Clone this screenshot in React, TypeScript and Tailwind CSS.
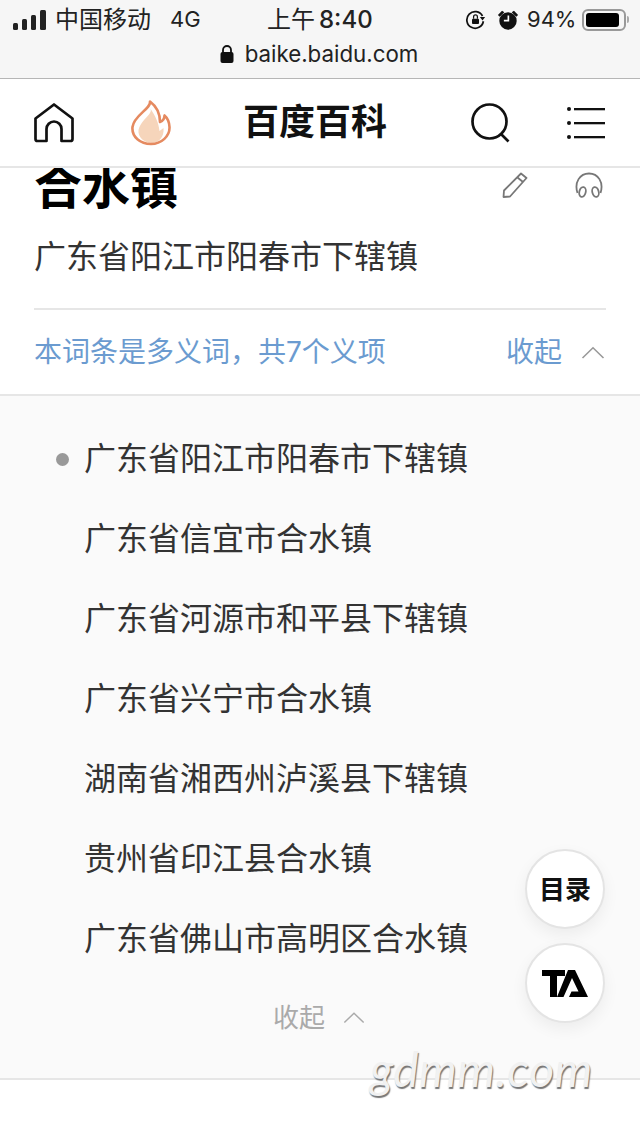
const senses = [
  "广东省阳江市阳春市下辖镇",
  "广东省信宜市合水镇",
  "广东省河源市和平县下辖镇",
  "广东省兴宁市合水镇",
  "湖南省湘西州泸溪县下辖镇",
  "贵州省印江县合水镇",
  "广东省佛山市高明区合水镇",
];

const font = "font-['Inter','Noto_Sans_CJK_SC',sans-serif]";

function ChevronUp({ className }: { className: string }) {
  return (
    <svg viewBox="0 0 24 13" fill="none" stroke="currentColor" strokeWidth="1.6" className={className}>
      <path d="M1.5 12 12 1.8 22.5 12" />
    </svg>
  );
}

function StatusBar() {
  return (
    <div className="flex h-[39px] items-center pl-[13px] text-[24px] text-[#222]">
      <svg viewBox="0 0 34 20" className="h-[20px] w-[34px]" fill="currentColor">
        <rect x="0" y="13" width="5" height="7" rx="1.5" />
        <rect x="9" y="9" width="5" height="11" rx="1.5" />
        <rect x="18" y="5" width="5" height="15" rx="1.5" />
        <rect x="27" y="0" width="6" height="20" rx="1.5" />
      </svg>
      <span className="ml-[8px] w-[115px]">中国移动</span>
      <span className="w-[31px] text-[22px]">4G</span>
      <span className="ml-[66px] flex w-[198px] items-center">
        上午
        <span className="ml-[4px] text-[24px] font-medium">8:40</span>
      </span>
      <svg viewBox="0 0 24 24" className="h-[21px] w-[21px]" fill="none" stroke="#111" strokeWidth="2">
        <path d="M20 8A9.5 9.5 0 1 0 21 14" />
        <path d="M17 9h6l-3 4z" fill="#111" stroke="none" />
        <rect x="8" y="11" width="8" height="6" rx="1" fill="#111" stroke="none" />
        <path d="M9.8 11V9a2.2 2.2 0 0 1 4.4 0v2" strokeWidth="1.4" />
      </svg>
      <svg viewBox="0 0 24 24" className="ml-[11px] h-[22px] w-[22px]" fill="#111">
        <circle cx="12" cy="13" r="9.5" />
        <path d="M1 6.5 5.5 2 8 3.500 3 8.500zM23 6.500 18.500 2 16 3.500 21 8.500z" />
        <path d="M11.500 7h1.800v6.500H7.500v-1.700h4z" fill="#fff" />
      </svg>
      <span className="ml-[8px] w-[50px] text-[22px]">94%</span>
      <div className="ml-[5px] flex h-[22px] w-[44px] items-center rounded-[6px] border-2 border-[#999] p-[2px]">
        <div className="h-full w-[92%] rounded-[3px] bg-black" />
      </div>
      <div className="ml-[1px] h-[7px] w-[2px] rounded-r bg-[#aaa]" />
    </div>
  );
}

function UrlBar() {
  return (
    <div className="flex h-[40px] items-start justify-center gap-[11px] border-b-[1.5px] border-[#b6b6b6] pt-[1px] pr-[2px]">
      <svg viewBox="0 0 14 18" className="mt-[4px] h-[20px] w-[14px]" fill="#111">
        <rect x="0.5" y="7" width="13" height="11" rx="2" />
        <path d="M3 8V5a4 4 0 0 1 8 0v3" fill="none" stroke="#111" strokeWidth="1.8" />
      </svg>
      <span className="text-[22.3px] leading-[28px] text-[#222]">baike.baidu.com</span>
    </div>
  );
}

function NavBar() {
  return (
    <nav className="flex h-[89px] items-center border-b-2 border-[#e6e6e6] bg-white">
      <svg viewBox="0 0 40 40" className="ml-[34px] h-[40px] w-[40px]" fill="none" stroke="#111" strokeWidth="2.7" strokeLinejoin="round">
        <path d="M1.5 15.500 20 1.500 38.500 15.500V36a2 2 0 0 1-2 2H27.500V26a7.500 7.500 0 0 0-15 0V38H3.500a2 2 0 0 1-2-2z" />
      </svg>
      <svg viewBox="0 0 40 46" className="ml-[57px] h-[46px] w-[40px]">
        <path d="M19 8C23 14 11 18 7.500 30c-1 7 6 13 13 13s13-6 12-15l-4 3c-1-9-4-15-9.500-23z" fill="#f6d5bb" />
        <path d="M19 1.500C20 9 3 15 1.500 27c-1 10 8 17 18.500 17s19-8 18.500-17c-.3-5-2-9-5-11.500 0 3-1.500 5.500-4.500 6.500C29 13 25 6 19 1.500z" fill="none" stroke="#e58a60" strokeWidth="2.6" strokeLinejoin="round" />
      </svg>
      <h1 className="ml-[72px] mb-[2px] w-[145px] text-[36px] leading-none font-bold text-[#111]">百度百科</h1>
      <svg viewBox="0 0 40 40" className="ml-[83px] h-[40px] w-[40px]" fill="none" stroke="#111" strokeWidth="2.7">
        <circle cx="18.500" cy="18.500" r="17" />
        <path d="m30 31 7.500 7.500" />
      </svg>
      <svg viewBox="0 0 38 34" className="ml-[56px] h-[34px] w-[38px]" fill="#111">
        <circle cx="2" cy="3" r="2" />
        <circle cx="2" cy="17" r="2" />
        <circle cx="2" cy="31" r="2" />
        <rect x="7" y="2" width="31" height="2.300" />
        <rect x="7" y="16" width="31" height="2.300" />
        <rect x="7" y="30" width="31" height="2.300" />
      </svg>
    </nav>
  );
}

function TitleBlock() {
  return (
    <section className="h-[228px] overflow-hidden border-b-2 border-[#e6e6e6] bg-white px-[34px]">
      <div className="-mt-[4px] flex items-start justify-between">
        <h2 className="text-[48px] leading-[46px] font-bold text-[#000]">合水镇</h2>
        <div className="mr-[3px] mt-[8px] flex gap-[47px]">
          <svg viewBox="0 0 26 26" className="h-[26px] w-[26px]" fill="none" stroke="#777" strokeWidth="1.8" strokeLinejoin="round">
            <path d="M19 1.500 24.500 6 8 24.500 1.500 25 2 18.500z" />
            <path d="m15.500 5.500 5.500 4.500" />
          </svg>
          <svg viewBox="0 0 28 27" className="h-[27px] w-[28px]" fill="none" stroke="#777" strokeWidth="1.8">
            <path d="M2.500 21C-1 10 5 1.500 14 1.500S29 10 25.500 21" />
            <ellipse cx="7.500" cy="20" rx="3.200" ry="5" transform="rotate(15 7.500 20)" />
            <ellipse cx="20.500" cy="20" rx="3.200" ry="5" transform="rotate(-15 20.500 20)" />
          </svg>
        </div>
      </div>
      <p className="mt-[25px] text-[32px] leading-[44px] text-[#333]">广东省阳江市阳春市下辖镇</p>
      <div className="mt-[29px] flex h-[86px] items-center border-t-2 border-[#e6e6e6] pr-[1px] text-[#6b9bd0]">
        <span className="text-[28px]">本词条是多义词，共7个义项</span>
        <span className="ml-auto text-[28px]">收起</span>
        <ChevronUp className="ml-[19px] h-[13px] w-[24px] text-[#999]" />
      </div>
    </section>
  );
}

function SenseList() {
  return (
    <section className="h-[684px] border-b-2 border-[#e6e6e6] bg-[#fafafa] pl-[84px] pt-[23px]">
      <ul>
        {senses.map((sense, i) => (
          <li key={sense} className="relative h-[80px] text-[32px] leading-[80px] text-[#333]">
            {i === 0 && <span className="absolute top-[34px] -left-[28px] h-[13px] w-[13px] rounded-full bg-[#999]" />}
            {sense}
          </li>
        ))}
      </ul>
      <div className="-ml-[84px] mt-[19px] flex items-center justify-center pr-[2px] text-[26px] text-[#aaa]">
        <span>收起</span>
        <ChevronUp className="ml-[18px] h-[13px] w-[22px]" />
      </div>
    </section>
  );
}

function FloatButton({ children, className }: { children: React.ReactNode; className: string }) {
  return (
    <div className={`absolute left-[525px] flex h-[80px] w-[80px] items-center justify-center rounded-full border-2 border-[#e4e4e4] bg-white shadow-[0_6px_16px_rgba(0,0,0,0.06)] ${className}`}>
      {children}
    </div>
  );
}

export default function App() {
  return (
    <div className={`relative h-[1136px] w-[640px] overflow-hidden bg-white ${font}`}>
      <header className="bg-[#f6f6f6]">
        <StatusBar />
        <UrlBar />
      </header>
      <NavBar />
      <TitleBlock />
      <SenseList />

      <FloatButton className="top-[849px]">
        <span className="text-[26px] font-bold text-[#111]">目录</span>
      </FloatButton>
      <FloatButton className="top-[943px]">
        <svg viewBox="0 0 46 27" className="h-[27px] w-[46px]" fill="#000">
          <path d="M0 0H23V6H15V27H8V6H0z" />
          <path d="M26 0H33L46 27H27L29.500 21.500H36.500L30 8 21.500 27H15z" />
        </svg>
      </FloatButton>

      {/* site watermark */}
      <span className="absolute left-[370px] top-[1045px] font-['Lato',sans-serif] text-[48px] leading-none tracking-[0.5px] text-[#f1f1f1] italic [text-shadow:1px_2px_1px_#777]">
        gdmm.com
      </span>
    </div>
  );
}
